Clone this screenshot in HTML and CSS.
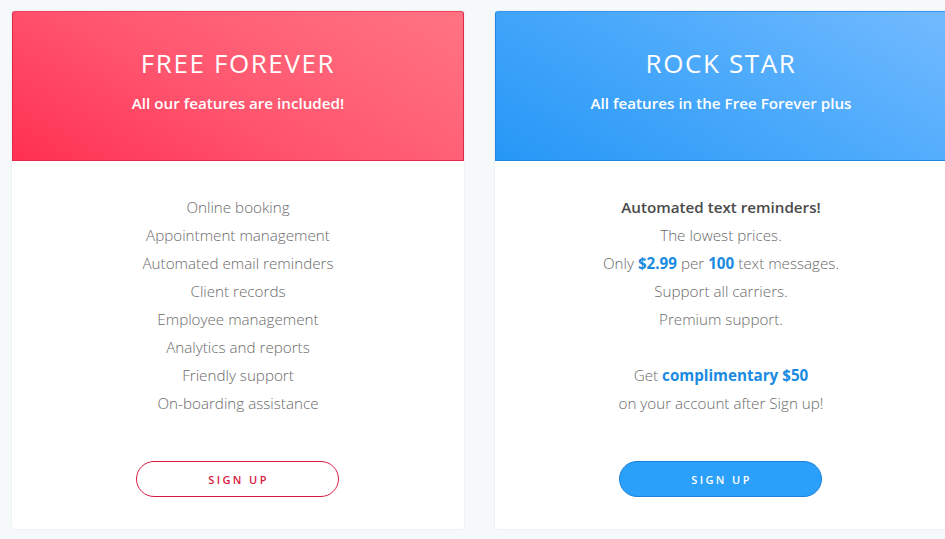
FILE: index.html
```
<!DOCTYPE html>
<html>
<head>
<meta charset="utf-8">
<link rel="stylesheet" href="styles.css">
</head>
<body>
<div class="plans">
  <div class="card">
    <div class="head head-red">
      <h2 class="title">FREE FOREVER</h2>
      <p class="sub">All our features are included!</p>
    </div>
    <div class="body">
      <ul class="list">
        <li>Online booking</li>
        <li>Appointment management</li>
        <li>Automated email reminders</li>
        <li>Client records</li>
        <li>Employee management</li>
        <li>Analytics and reports</li>
        <li>Friendly support</li>
        <li>On-boarding assistance</li>
      </ul>
      <a class="btn btn-outline">SIGN UP</a>
    </div>
  </div>
  <div class="card">
    <div class="head head-blue">
      <h2 class="title">ROCK STAR</h2>
      <p class="sub">All features in the Free Forever plus</p>
    </div>
    <div class="body">
      <ul class="list">
        <li class="strong">Automated text reminders!</li>
        <li>The lowest prices.</li>
        <li>Only <b class="hl">$2.99</b> per <b class="hl">100</b> text messages.</li>
        <li>Support all carriers.</li>
        <li>Premium support.</li>
        <li class="blank">&nbsp;</li>
        <li>Get <b class="hl">complimentary $50</b></li>
        <li>on your account after Sign up!</li>
      </ul>
      <a class="btn btn-fill">SIGN UP</a>
    </div>
  </div>
</div>
</body>
</html>
```
FILE: styles.css
```
html, body {
  margin: 0;
  padding: 0;
  background: #f6f9f9;
  overflow: hidden;
}
body {
  font-family: "Open Sans", "Liberation Sans", sans-serif;
  width: 945px;
  height: 539px;
}
.plans {
  display: flex;
  gap: 31px;
  padding: 11px 0 0 12px;
  width: 960px;
}
.card {
  flex: 0 0 452px;
  width: 452px;
  background: #fff;
  border-radius: 3px;
  box-shadow: 0 0 0 1px #eef2f2;
  height: 518px;
  display: flex;
  flex-direction: column;
}
.head {
  height: 150px;
  border-radius: 3px 3px 0 0;
  text-align: center;
  color: #fff;
  box-sizing: border-box;
  padding-top: 33px;
}
.head-red {
  background: linear-gradient(30deg, #ff3052 0%, #ff566f 45%, #ff7482 100%);
  border: 1px solid #e0284a;
  border-top-color: #f0405d;
}
.head-blue {
  background: linear-gradient(30deg, #2697f6 0%, #4aa9fb 50%, #72baff 100%);
  border: 1px solid #1e88e0;
  border-top-color: #3596f0;
}
.title {
  margin: 0;
  font-size: 26px;
  line-height: 36px;
  font-weight: 500;
  letter-spacing: 1.6px;
}
.sub {
  margin: 12px 0 0;
  font-size: 15.2px;
  line-height: 20px;
  font-weight: 600;
}
.body {
  flex: 1;
  display: flex;
  flex-direction: column;
  align-items: center;
  padding-top: 32px;
}
.list {
  list-style: none;
  margin: 0;
  padding: 0;
  text-align: center;
  color: #6a6a6a;
  font-size: 15.2px;
  line-height: 28px;
  font-weight: 300;
}
.list .strong {
  font-weight: 600;
  color: #4a4a4a;
}
.hl {
  color: #1a8be0;
  font-weight: 700;
}
.btn {
  margin-top: 44px;
  margin-right: 2px;
  width: 203px;
  height: 36px;
  box-sizing: border-box;
  border-radius: 18px;
  display: flex;
  align-items: center;
  justify-content: center;
  font-size: 11px;
  letter-spacing: 2.4px;
  font-weight: 600;
  padding-left: 3px;
}
.btn-outline {
  border: 1px solid #d81a40;
  color: #d81a40;
  background: #fff;
}
.btn-fill {
  border: 1px solid #1a80d8;
  background: #2aa0fa;
  color: #fff;
}
```
